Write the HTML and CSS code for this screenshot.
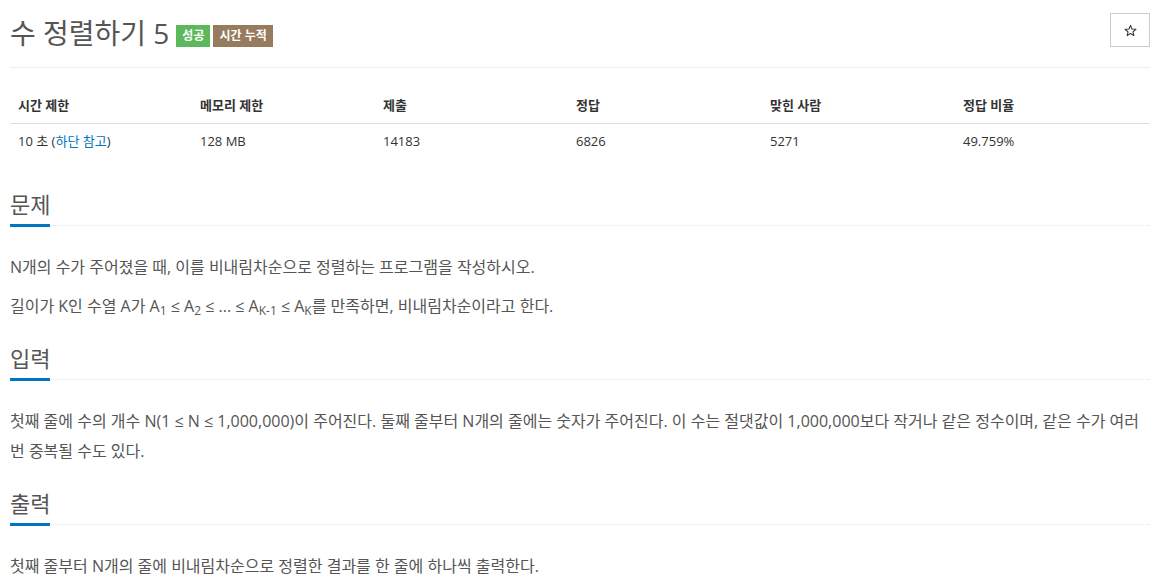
FILE: index.html
```html
<!DOCTYPE html>
<html lang="ko">
<head>
<meta charset="utf-8">
<title>수 정렬하기 5</title>
<link rel="stylesheet" href="styles.css">
</head>
<body>
<div class="page">
  <div class="title-row">
    <h1 class="title">
      <span class="title-text">수 정렬하기 5</span>
      <span class="badge badge-ok">성공</span>
      <span class="badge badge-time">시간 누적</span>
    </h1>
    <button class="star-btn" type="button" aria-label="즐겨찾기">
      <svg width="13" height="13" viewBox="0 0 24 24"><path d="M12 2.5l2.8 6.6 7.2.6-5.5 4.7 1.7 7-6.2-3.8-6.2 3.8 1.7-7L2 9.7l7.2-.6z" fill="none" stroke="#333" stroke-width="2" stroke-linejoin="round"/></svg>
    </button>
  </div>
  <hr class="rule">
  <table class="info">
    <thead>
      <tr>
        <th class="c1">시간 제한</th>
        <th class="c2">메모리 제한</th>
        <th class="c3">제출</th>
        <th class="c4">정답</th>
        <th class="c5">맞힌 사람</th>
        <th class="c6">정답 비율</th>
      </tr>
    </thead>
    <tbody>
      <tr>
        <td>10 초 (<a href="#" class="link">하단 참고</a>)</td>
        <td>128 MB</td>
        <td>14183</td>
        <td>6826</td>
        <td>5271</td>
        <td>49.759%</td>
      </tr>
    </tbody>
  </table>

  <section class="section first">
    <div class="headline"><h2>문제</h2></div>
    <div class="text">
      <p>N개의 수가 주어졌을 때, 이를 비내림차순으로 정렬하는 프로그램을 작성하시오.</p>
      <p>길이가 K인 수열 A가 A<sub>1</sub> ≤ A<sub>2</sub> ≤ ... ≤ A<sub>K-1</sub> ≤ A<sub>K</sub>를 만족하면, 비내림차순이라고 한다.</p>
    </div>
  </section>

  <section class="section">
    <div class="headline"><h2>입력</h2></div>
    <div class="text">
      <p>첫째 줄에 수의 개수 N(1 ≤ N ≤ 1,000,000)이 주어진다. 둘째 줄부터 N개의 줄에는 숫자가 주어진다. 이 수는 절댓값이 1,000,000보다 작거나 같은 정수이며, 같은 수가 여러 번 중복될 수도 있다.</p>
    </div>
  </section>

  <section class="section">
    <div class="headline"><h2>출력</h2></div>
    <div class="text">
      <p>첫째 줄부터 N개의 줄에 비내림차순으로 정렬한 결과를 한 줄에 하나씩 출력한다.</p>
    </div>
  </section>
</div>
</body>
</html>
```

FILE: styles.css
```css
* { box-sizing: border-box; }

html, body {
  margin: 0;
  padding: 0;
  background: #fff;
}

body {
  font-family: "Open Sans", "Noto Sans CJK KR", sans-serif;
  color: #333;
  font-size: 13px;
}

.page {
  width: 1140px;
  margin-left: 10px;
}

.title-row {
  display: flex;
  justify-content: space-between;
  align-items: flex-start;
  padding-top: 13px;
}

.title {
  margin: 0;
  display: flex;
  align-items: center;
  height: 40px;
  font-size: 28px;
  font-weight: 400;
  color: #555;
  line-height: 40px;
}

.badge {
  display: inline-block;
  font-size: 12px;
  font-weight: 700;
  color: #fff;
  line-height: 22px;
  height: 22px;
  padding: 0 6px;
  margin-top: 6px;
  border-radius: 0;
}

.badge-ok {
  background: #5cb85c;
  margin-left: 7px;
}

.badge-time {
  background: #977b5e;
  margin-left: 3px;
}

.star-btn {
  width: 40px;
  height: 34px;
  border: 1px solid #ccc;
  background: #fff;
  border-radius: 0;
  padding: 0;
  display: flex;
  align-items: center;
  justify-content: center;
  margin-right: 0;
}

.rule {
  border: 0;
  border-top: 1px solid #eee;
  margin: 14px 0 0;
}

.info {
  width: 100%;
  border-collapse: collapse;
  margin-top: 20px;
  table-layout: fixed;
}

.info th,
.info td {
  text-align: left;
  padding: 8px;
  line-height: 19px;
  font-size: 13px;
  color: #333;
}

.info th {
  font-weight: 700;
  border-bottom: 1px solid #ddd;
}

.c1 { width: 182px; }
.c2 { width: 183px; }
.c3 { width: 193px; }
.c4 { width: 194px; }
.c5 { width: 193px; }
.c6 { width: 195px; }

.link {
  color: #0076c0;
  text-decoration: none;
}

.section {
  margin-top: 22px;
}

.section.first {
  margin-top: 30px;
}

.headline {
  border-bottom: 1px dotted #e2e6ea;
}

.headline h2 {
  display: inline-block;
  margin: 0 0 -2px;
  font-size: 22px;
  font-weight: 400;
  line-height: 30px;
  color: #555;
  padding-bottom: 5px;
  border-bottom: 3px solid #0076c0;
}

.text {
  margin-top: 26px;
  font-size: 16px;
  line-height: 30px;
  color: #555;
}

.text p {
  margin: 0 0 9px;
}

.text sub {
  font-size: 12px;
  line-height: 0;
  vertical-align: -3px;
}
```
